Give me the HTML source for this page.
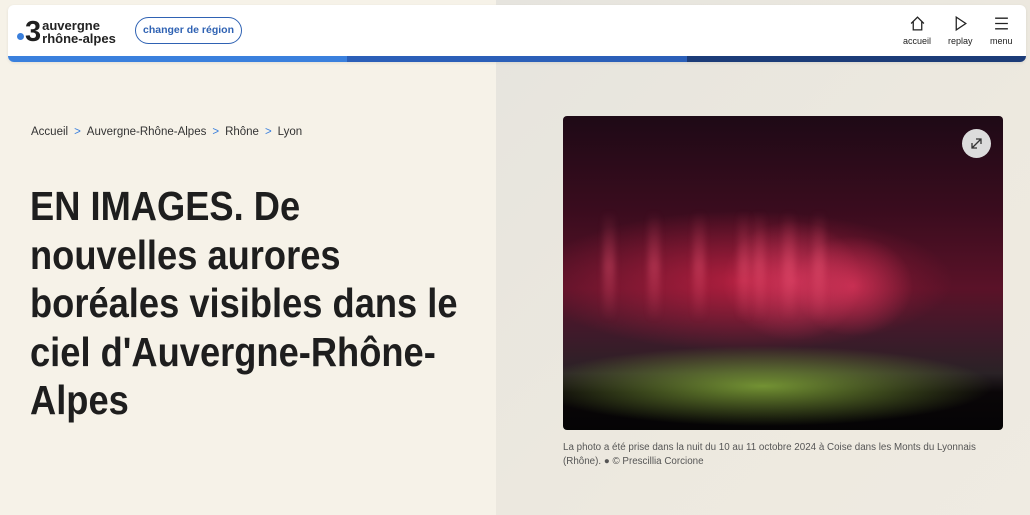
<!DOCTYPE html>
<html><head><meta charset="utf-8"><style>
*{margin:0;padding:0;box-sizing:border-box}
body{width:1030px;height:515px;overflow:hidden;font-family:"Liberation Sans",sans-serif;background:#f6f2e8;position:relative;color:#1f1f1f}
.right{position:absolute;left:496px;top:0;width:534px;height:515px;background:linear-gradient(135deg,#e6e4de,#ede9df 60%,#efebe2)}
.hdr{position:absolute;left:8px;top:5px;width:1018px;height:57px;background:#fff;border-radius:6px;overflow:hidden;box-shadow:0 1px 3px rgba(0,0,0,.08)}
.bar{position:absolute;left:0;bottom:0;height:6px;width:100%;display:flex}
.bar div{flex:1}
.logo{position:absolute;left:9px;top:14px;display:flex;align-items:center}
.dot{width:7px;height:7px;border-radius:50%;background:#3a7fdc;margin-top:8px}
.three{font-size:29px;font-weight:bold;line-height:26px;margin-left:1px;letter-spacing:-1px}
.lt{font-size:13px;font-weight:bold;line-height:13px;margin-left:2px;color:#222}
.btn{position:absolute;left:127px;top:12px;width:107px;height:27px;border:1.5px solid #2f62b3;border-radius:14px;font-size:10.5px;color:#2f62b3;text-align:center;line-height:24px;font-weight:bold}
.nav{position:absolute;top:10px;font-size:9px;text-align:center;color:#222}
.nav svg{display:block;margin:0 auto 4px}
.bc{position:absolute;left:31px;top:126px;font-size:11.5px;color:#333}
.bc span{color:#3a7fdc;margin:0 6px}
h1{position:absolute;left:30px;top:182px;font-size:41px;line-height:48.5px;font-weight:bold;white-space:nowrap;color:#1e1e1e;transform:scaleX(.885);transform-origin:0 0}
.img{position:absolute;left:563px;top:116px;width:440px;height:314px;border-radius:4px;overflow:hidden;background:
radial-gradient(ellipse 70px 60px at 230px 165px,rgba(240,70,110,.55),transparent),
radial-gradient(ellipse 60px 50px at 290px 170px,rgba(240,60,100,.6),transparent),
radial-gradient(ellipse 210px 70px at 180px 165px,rgba(205,35,70,.75),transparent),
radial-gradient(ellipse 230px 40px at 200px 270px,rgba(125,160,55,.9),transparent),
linear-gradient(180deg,#1e0a16 0%,#3a0c1e 30%,#5a1228 55%,#3e1a2a 70%,#2a2226 82%,#0a0608 88%,#050405 100%)}
.pl{position:absolute;top:95px;width:12px;height:110px;background:linear-gradient(180deg,transparent,rgba(240,90,120,.35),transparent);filter:blur(3px)}
.exp{position:absolute;right:12px;top:13px;width:29px;height:29px;border-radius:50%;background:#dcdcdc}
.cap{position:absolute;left:563px;top:441px;font-size:9.8px;line-height:14px;color:#555;width:430px}
</style></head><body>
<div class="right"></div>
<div class="hdr">
 <div class="logo"><div class="dot"></div><div class="three">3</div><div class="lt">auvergne<br>rhône-alpes</div></div>
 <div class="btn">changer de région</div>
 <div class="nav" style="left:895px"><svg width="17" height="17" viewBox="0 0 16 16"><path d="M2 8L8 2L14 8M4 6V14H12V6" fill="none" stroke="#222" stroke-width="1.2"/></svg>accueil</div>
 <div class="nav" style="left:940px"><svg width="17" height="17" viewBox="0 0 16 16"><path d="M4 2L13 8L4 14Z" fill="none" stroke="#222" stroke-width="1.2"/></svg>replay</div>
 <div class="nav" style="left:982px"><svg width="17" height="17" viewBox="0 0 16 16"><path d="M2 3H14M2 8H14M2 13H14" stroke="#222" stroke-width="1.2"/></svg>menu</div>
 <div class="bar"><div style="background:#3a80dd"></div><div style="background:#2b5fb8"></div><div style="background:#1c3c78"></div></div>
</div>
<div class="bc">Accueil<span>&gt;</span>Auvergne-Rhône-Alpes<span>&gt;</span>Rhône<span>&gt;</span>Lyon</div>
<h1>EN IMAGES. De<br>nouvelles aurores<br>boréales visibles dans le<br>ciel d'Auvergne-Rhône-<br>Alpes</h1>
<div class="img">
<div class="pl" style="left:40px"></div><div class="pl" style="left:85px"></div><div class="pl" style="left:130px"></div><div class="pl" style="left:175px"></div><div class="pl" style="left:190px"></div><div class="pl" style="left:220px"></div><div class="pl" style="left:250px"></div>
<div class="exp"><svg width="29" height="29" viewBox="0 0 29 29"><path d="M10 19L19 10M14 10H19V15M10 14V19H15" fill="none" stroke="#333" stroke-width="1.3"/></svg></div></div>
<div class="cap">La photo a été prise dans la nuit du 10 au 11 octobre 2024 à Coise dans les Monts du Lyonnais (Rhône). ● © Prescillia Corcione</div>
</body></html>
